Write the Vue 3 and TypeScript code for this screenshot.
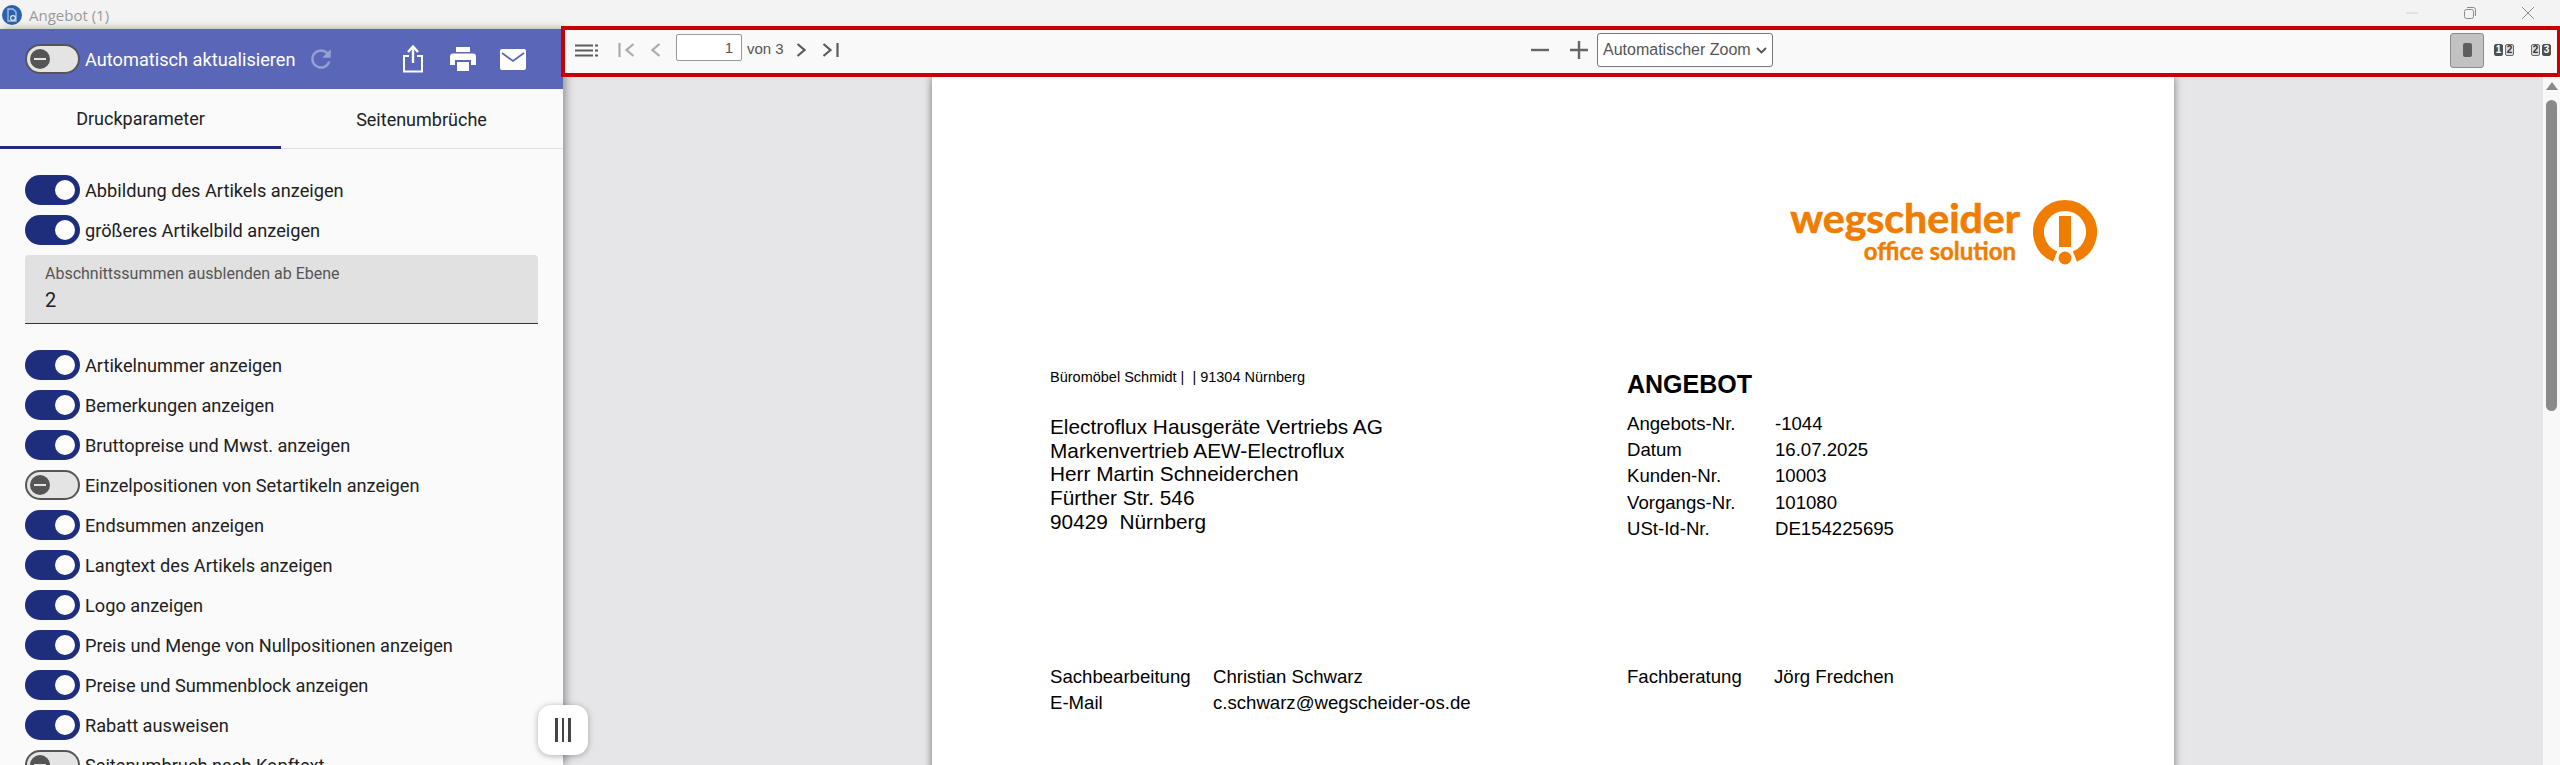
<template>
  <div class="app">
    <div class="titlebar">
      <svg class="app-icon" width="20" height="20" viewBox="0 0 20 20">
        <circle cx="10" cy="10" r="10" fill="#2a63ad" />
        <path d="M6 4h5l3 3v9H6z" fill="none" stroke="#a9c6e8" stroke-width="1.3" />
        <circle cx="11" cy="13" r="2.4" fill="none" stroke="#dce9f7" stroke-width="1.2" />
      </svg>
      <span class="title">Angebot (1)</span>
      <div class="win-controls">
        <svg width="12" height="12" viewBox="0 0 12 12"><path d="M0 6h12" stroke="#d0d0d0" /></svg>
        <svg width="12" height="12" viewBox="0 0 12 12">
          <rect x=".5" y="2.5" width="9" height="9" rx="2" fill="none" stroke="#8a8a8a" />
          <path d="M3 .5h6.5a2 2 0 0 1 2 2V9" fill="none" stroke="#8a8a8a" />
        </svg>
        <svg width="12" height="12" viewBox="0 0 12 12"><path d="M0 0l12 12M12 0L0 12" stroke="#8a8a8a" /></svg>
      </div>
    </div>

    <div class="main">
      <aside class="sidebar">
        <div class="side-head">
          <span class="toggle off"><i></i></span>
          <span class="auto-label">Automatisch aktualisieren</span>
          <svg class="refresh" width="22" height="22" viewBox="3 3 18 18">
            <path d="M17.65 6.35A7.96 7.96 0 0 0 12 4a8 8 0 1 0 7.73 10h-2.08A6 6 0 1 1 12 6c1.66 0 3.14.69 4.22 1.78L13 11h7V4z" fill="#98a1d3" />
          </svg>
          <svg class="share" width="22" height="28" viewBox="0 0 22 28">
            <path d="M7 11H2v15.5h18V11h-5" fill="none" stroke="#fff" stroke-width="2" />
            <path d="M11 18V3M6 7l5-5.5L16 7" fill="none" stroke="#fff" stroke-width="2.4" />
          </svg>
          <svg class="print" width="26" height="24" viewBox="0 0 26 24">
            <path d="M6 0h14v5H6zM3 6.500h20a3 3 0 0 1 3 3V18h-5v-5H5v5H0V9.500a3 3 0 0 1 3-3zM7 15h12v9H7z" fill="#fff" />
          </svg>
          <svg class="mail" width="26" height="21" viewBox="0 0 26 21">
            <rect width="26" height="21" rx="2" fill="#fff" />
            <path d="M2 4l11 8 11-8" fill="none" stroke="#5a67b8" stroke-width="1.800" />
          </svg>
        </div>

        <div class="tabs">
          <div class="tab active">Druckparameter</div>
          <div class="tab">Seitenumbrüche</div>
        </div>

        <div class="params">
          <label v-for="row in topRows" :key="row.label" class="param">
            <span class="toggle" :class="{ off: !row.on }"><i></i></span>
            {{ row.label }}
          </label>

          <div class="field">
            <span class="field-label">Abschnittssummen ausblenden ab Ebene</span>
            <span class="field-value">2</span>
          </div>

          <label v-for="row in bottomRows" :key="row.label" class="param">
            <span class="toggle" :class="{ off: !row.on }"><i></i></span>
            {{ row.label }}
          </label>
        </div>
      </aside>

      <div class="handle"><b></b><b></b><b></b></div>

      <section class="viewer">
        <div class="toolbar">
          <div class="tool-left">
            <svg width="23" height="13" viewBox="0 0 23 13">
              <path d="M0 1.500h18M0 6.500h18M0 11.500h18M20 1.500h3M20 6.500h3M20 11.500h3" stroke="#5b5b5b" stroke-width="2.200" />
            </svg>
            <svg class="first" width="17" height="14" viewBox="0 0 17 14">
              <path d="M1.500 0v14M15.500 1l-7 6 7 6" fill="none" stroke="#ababab" stroke-width="2.200" />
            </svg>
            <svg class="prev" width="10" height="14" viewBox="0 0 10 14">
              <path d="M8.500 1l-7 6 7 6" fill="none" stroke="#ababab" stroke-width="2.200" />
            </svg>
            <div class="page-input">1</div>
            <span class="page-count">von 3</span>
            <svg class="next" width="10" height="14" viewBox="0 0 10 14">
              <path d="M1.500 1l7 6-7 6" fill="none" stroke="#5b5b5b" stroke-width="2.200" />
            </svg>
            <svg class="last" width="17" height="14" viewBox="0 0 17 14">
              <path d="M1.500 1l7 6-7 6M15.500 0v14" fill="none" stroke="#5b5b5b" stroke-width="2.200" />
            </svg>
          </div>

          <div class="tool-center">
            <svg width="18" height="18" viewBox="0 0 18 18"><path d="M0 9h18" stroke="#666" stroke-width="2.400" /></svg>
            <svg class="plus" width="18" height="18" viewBox="0 0 18 18"><path d="M0 9h18M9 0v18" stroke="#666" stroke-width="2.400" /></svg>
            <div class="zoom-select">
              Automatischer Zoom
              <svg width="11" height="7" viewBox="0 0 11 7"><path d="M1 1l4.500 4.500L10 1" fill="none" stroke="#555" stroke-width="1.800" /></svg>
            </div>
          </div>

          <div class="tool-right">
            <div class="mode-btn"><i></i></div>
            <div class="tiles">
              <span class="tile dark">1</span><span class="tile">2</span>
            </div>
            <div class="tiles">
              <span class="tile">2</span><span class="tile dark">3</span>
            </div>
          </div>
        </div>

        <div class="viewer-body">
          <div class="canvas">
            <article class="page">
              <div class="logo">
                <div class="logo-text">
                  <span class="logo-main">wegscheider</span>
                  <span class="logo-sub">office solution</span>
                </div>
                <svg width="64" height="66" viewBox="0 0 64 66">
                  <path d="M22.100 56.600A26.500 26.500 0 1 1 41.900 56.600" fill="none" stroke="#f07d00" stroke-width="11" />
                  <rect x="26" y="16" width="12" height="31" fill="#f07d00" />
                  <circle cx="32" cy="58" r="6.500" fill="#f07d00" />
                </svg>
              </div>

              <div class="doc-columns">
                <div class="address">
                  <p class="sender">Büromöbel Schmidt | &nbsp;| 91304 Nürnberg</p>
                  <p v-for="line in address" :key="line" class="addr-line">{{ line }}</p>
                </div>
                <div class="offer">
                  <h1>ANGEBOT</h1>
                  <div v-for="item in offerInfo" :key="item[0]" class="offer-row">
                    <span>{{ item[0] }}</span><span>{{ item[1] }}</span>
                  </div>
                </div>
              </div>

              <div class="contacts">
                <div class="contact-row"><span>Sachbearbeitung</span><span>Christian Schwarz</span></div>
                <div class="contact-row second"><span>Fachberatung</span><span>Jörg Fredchen</span></div>
                <div class="contact-row"><span>E-Mail</span><span>c.schwarz@wegscheider-os.de</span></div>
              </div>
            </article>
          </div>

          <div class="scrollbar">
            <i class="arrow"></i>
            <i class="thumb"></i>
          </div>
        </div>
      </section>
    </div>
  </div>
</template>

<script setup lang="ts">
interface Param {
  label: string
  on: boolean
}

const topRows: Param[] = [
  { label: 'Abbildung des Artikels anzeigen', on: true },
  { label: 'größeres Artikelbild anzeigen', on: true },
]

const bottomRows: Param[] = [
  { label: 'Artikelnummer anzeigen', on: true },
  { label: 'Bemerkungen anzeigen', on: true },
  { label: 'Bruttopreise und Mwst. anzeigen', on: true },
  { label: 'Einzelpositionen von Setartikeln anzeigen', on: false },
  { label: 'Endsummen anzeigen', on: true },
  { label: 'Langtext des Artikels anzeigen', on: true },
  { label: 'Logo anzeigen', on: true },
  { label: 'Preis und Menge von Nullpositionen anzeigen', on: true },
  { label: 'Preise und Summenblock anzeigen', on: true },
  { label: 'Rabatt ausweisen', on: true },
  { label: 'Seitenumbruch nach Kopftext', on: false },
]

const address = [
  'Electroflux Hausgeräte Vertriebs AG',
  'Markenvertrieb AEW-Electroflux',
  'Herr Martin Schneiderchen',
  'Fürther Str. 546',
  '90429\u00a0 Nürnberg',
]

const offerInfo = [
  ['Angebots-Nr.', '-1044'],
  ['Datum', '16.07.2025'],
  ['Kunden-Nr.', '10003'],
  ['Vorgangs-Nr.', '101080'],
  ['USt-Id-Nr.', 'DE154225695'],
]
</script>

<style>
html, body {
  margin: 0;
  overflow: hidden;
}
</style>

<style scoped>
.app {
  height: 765px;
  display: flex;
  flex-direction: column;
  overflow: hidden;
  position: relative;
  font-family: Roboto, sans-serif;
  color: #212121;
}

.titlebar {
  height: 29px;
  flex: none;
  background: #f3f3f3;
  display: flex;
  align-items: center;
  padding-left: 2px;
}

.title {
  margin-left: 7px;
  font-family: "Open Sans", sans-serif;
  font-size: 15px;
  color: #9a9a9a;
}

.win-controls {
  margin-left: auto;
  margin-right: 26px;
  margin-top: -3px;
  display: flex;
  gap: 46px;
}

.main {
  flex: 1;
  min-height: 0;
  display: flex;
}

.sidebar {
  width: 563px;
  flex: none;
  background: #fafafa;
  box-shadow: 3px 0 8px rgba(0, 0, 0, 0.35);
  position: relative;
  z-index: 1;
}

.side-head {
  height: 60px;
  background: #5a67b8;
  display: flex;
  align-items: center;
  padding-left: 25px;
  color: #fff;
}

.auto-label {
  margin-left: 5px;
  font-size: 18.200px;
  width: 214px;
  white-space: nowrap;
}

.refresh { margin-left: 11px; }
.share { margin-left: 70px; }
.print { margin-left: 26px; }
.mail { margin-left: 24px; }

.tabs {
  height: 60px;
  box-sizing: border-box;
  display: flex;
  border-bottom: 1px solid #e0e0e0;
}

.tab {
  width: 281px;
  display: flex;
  align-items: center;
  justify-content: center;
  font-size: 18px;
  height: 60px;
  padding-top: 1px;
  box-sizing: border-box;
}

.tab.active {
  border-bottom: 3px solid #1f2d7d;
}

.params {
  padding: 26px 25px 0;
  display: flex;
  flex-direction: column;
  gap: 10px;
}

.param {
  height: 30px;
  flex: none;
  display: flex;
  align-items: center;
  gap: 5px;
  font-size: 18.200px;
  white-space: nowrap;
}

.toggle {
  width: 55px;
  height: 30px;
  box-sizing: border-box;
  flex: none;
  border-radius: 15px;
  background: #1f2d7d;
  display: flex;
  align-items: center;
  justify-content: flex-end;
  padding: 0 5px;
}

.toggle i {
  display: block;
  width: 20px;
  height: 20px;
  border-radius: 50%;
  background: #fff;
}

.toggle.off {
  background: #e4e4e4;
  border: 2px solid #555;
  justify-content: flex-start;
  padding: 0 3px;
}

.toggle.off i {
  background: #555;
  position: relative;
}

.toggle.off i::after {
  content: "";
  position: absolute;
  left: 4px;
  right: 4px;
  top: 9px;
  height: 2px;
  background: #e4e4e4;
}

.field {
  height: 69px;
  flex: none;
  box-sizing: border-box;
  background: #e1e1e1;
  border-radius: 4px 4px 0 0;
  border-bottom: 1.500px solid #333;
  padding: 10px 20px 0;
  margin-bottom: 16px;
  display: flex;
  flex-direction: column;
}

.field-label {
  font-size: 16px;
  color: #555;
  line-height: 18px;
}

.field-value {
  font-size: 20px;
  line-height: 26px;
  margin-top: 4px;
}

.handle {
  position: absolute;
  left: 538px;
  top: 705px;
  width: 50px;
  height: 50px;
  box-sizing: border-box;
  background: #fff;
  border-radius: 13px;
  box-shadow: 0 1px 6px rgba(0, 0, 0, 0.3);
  z-index: 3;
  display: flex;
  align-items: center;
  justify-content: center;
  gap: 4px;
}

.handle b {
  width: 2.500px;
  height: 24px;
  background: #444;
}

.viewer {
  flex: 1;
  min-width: 0;
  display: flex;
  flex-direction: column;
  background: #e6e6e8;
}

.toolbar {
  height: 51px;
  flex: none;
  box-sizing: border-box;
  margin: -3px 0 0 -2px;
  border: 4px solid #c80000;
  border-right-width: 3px;
  padding-bottom: 3px;
  background: #f9f9fa;
  display: flex;
  align-items: center;
  position: relative;
  z-index: 2;
  font-family: "Liberation Sans", Arial, sans-serif;
  color: #555;
}

.tool-left {
  width: 966px;
  flex: none;
  box-sizing: border-box;
  padding-left: 10px;
  display: flex;
  align-items: center;
}

.first { margin-left: 20px; }
.prev { margin-left: 16px; }

.page-input {
  width: 66px;
  height: 27px;
  box-sizing: border-box;
  margin-left: 15px;
  margin-top: -5px;
  background: #fff;
  border: 1px solid #999;
  border-radius: 2px;
  font-size: 15px;
  line-height: 25px;
  text-align: right;
  padding-right: 8px;
}

.page-count {
  margin-left: 5px;
  margin-top: -3px;
  width: 46px;
  font-size: 15px;
}

.next { margin-left: 3px; }
.last { margin-left: 16px; }

.tool-center {
  display: flex;
  align-items: center;
}

.plus { margin-left: 21px; }

.zoom-select {
  margin-left: 9px;
  width: 176px;
  height: 34px;
  box-sizing: border-box;
  background: #fff;
  border: 1px solid #777;
  border-radius: 3px;
  padding-left: 5px;
  display: flex;
  align-items: center;
  justify-content: space-between;
  padding-right: 5px;
  font-size: 16px;
  white-space: nowrap;
}

.tool-right {
  margin-left: auto;
  margin-right: 6px;
  display: flex;
  align-items: center;
}

.mode-btn {
  width: 34px;
  height: 35px;
  box-sizing: border-box;
  background: #c2c2c2;
  border: 1px solid #8c8c8c;
  border-radius: 3px;
  display: flex;
  align-items: center;
  justify-content: center;
}

.mode-btn i {
  width: 9px;
  height: 14px;
  border-radius: 2px;
  background: #5f5f5f;
}

.tiles {
  display: flex;
  gap: 2px;
  margin-left: 10px;
}

.tiles + .tiles {
  margin-left: 17px;
}

.tile {
  width: 9px;
  height: 12px;
  box-sizing: border-box;
  border: 1px solid #6a6a6a;
  border-radius: 2px;
  background: #dcdcdc;
  color: #333;
  font-size: 10px;
  line-height: 10px;
  font-weight: 700;
  text-align: center;
  overflow: visible;
  display: flex;
  justify-content: center;
}

.tile.dark {
  background: #4f4f4f;
  border-color: #4f4f4f;
  color: #fff;
}

.viewer-body {
  flex: 1;
  min-height: 0;
  display: flex;
  overflow: hidden;
}

.canvas {
  flex: 1;
  min-width: 0;
  display: flex;
  justify-content: center;
  overflow: hidden;
}

.page {
  width: 1242px;
  height: 1000px;
  flex: none;
  box-sizing: border-box;
  background: #fff;
  box-shadow: 0 0 8px rgba(0, 0, 0, 0.5);
  padding: 123px 77px 0 118px;
  font-family: "Liberation Sans", Arial, sans-serif;
  color: #000;
}

.logo {
  display: flex;
  justify-content: flex-end;
  gap: 13px;
  color: #f07d00;
  font-family: Lato, sans-serif;
  font-weight: 700;
}

.logo-text {
  display: flex;
  flex-direction: column;
  align-items: flex-end;
}

.logo-main {
  font-size: 41px;
  line-height: 40px;
  margin-top: -2px;
  -webkit-text-stroke: 0.7px #f07d00;
}

.logo-sub {
  font-size: 24px;
  line-height: 24px;
  margin-right: 4px;
  margin-top: 1px;
  -webkit-text-stroke: 0.4px #f07d00;
}

.doc-columns {
  display: flex;
  margin-top: 103px;
}

.address {
  width: 577px;
  flex: none;
}

.address p {
  margin: 0;
}

.sender {
  font-size: 14.500px;
  line-height: 16px;
  margin-bottom: 30px !important;
}

.addr-line {
  font-size: 20.800px;
  line-height: 23.700px;
}

.offer h1 {
  margin: 1px 0 13px;
  font-size: 25px;
  line-height: 28px;
  font-weight: 700;
}

.offer-row {
  display: flex;
  font-size: 18.600px;
  line-height: 26.200px;
}

.offer-row span:first-child {
  width: 148px;
  flex: none;
}

.contacts {
  margin-top: 122px;
  display: grid;
  grid-template-columns: 577px 1fr;
  font-size: 18.600px;
  line-height: 26px;
}

.contact-row {
  display: flex;
}

.contact-row span:first-child {
  width: 163px;
  flex: none;
}

.contact-row.second span:first-child {
  width: 147px;
}

.scrollbar {
  width: 17px;
  flex: none;
  background: #f8f8f8;
  display: flex;
  flex-direction: column;
  align-items: center;
}

.arrow {
  margin-top: 5px;
  width: 0;
  height: 0;
  border-left: 6px solid transparent;
  border-right: 6px solid transparent;
  border-bottom: 8px solid #8a8a8a;
}

.thumb {
  margin-top: 10px;
  width: 11px;
  height: 311px;
  border-radius: 6px;
  background: #8a8a8a;
}
</style>
